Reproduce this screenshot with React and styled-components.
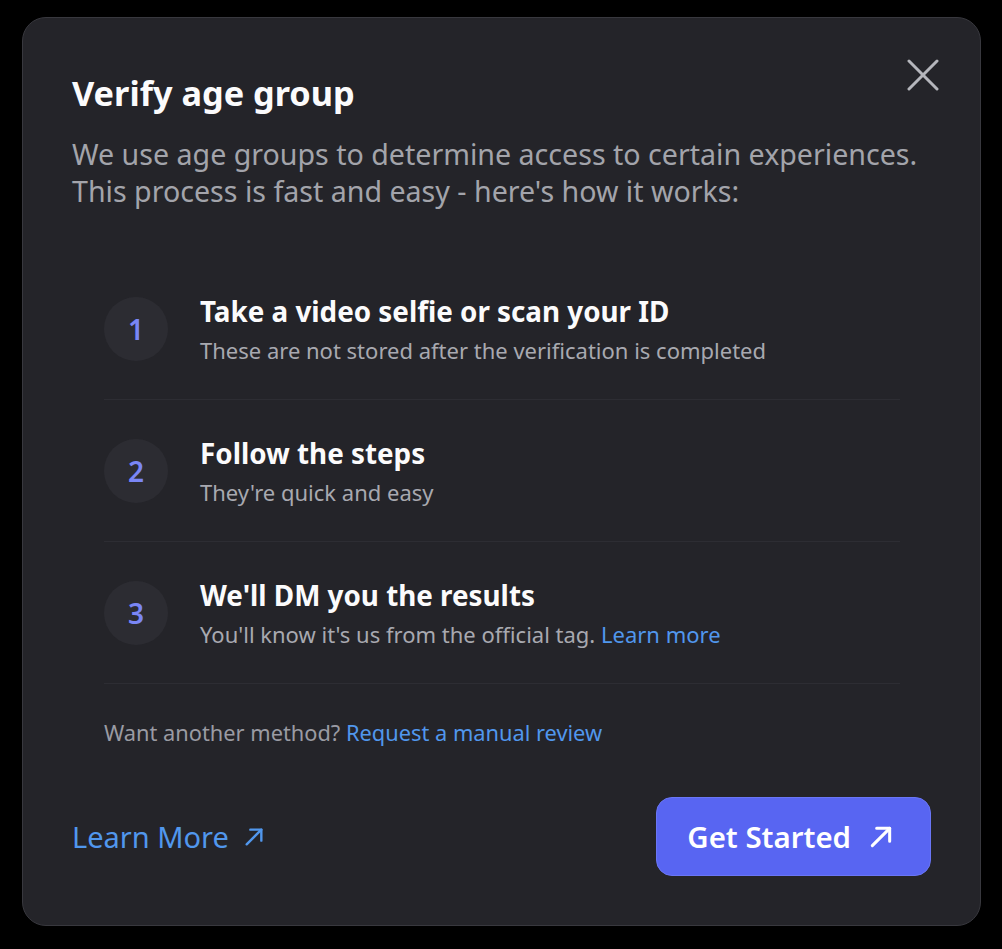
import React from "react";
import styled, { createGlobalStyle } from "styled-components";

const GlobalStyle = createGlobalStyle`
  html, body {
    margin: 0;
    padding: 0;
    background: #000;
  }
  body {
    font-family: "Noto Sans", "Open Sans", sans-serif;
  }
`;

const Page = styled.div`
  width: 1002px;
  height: 949px;
  padding: 17px 0 0 22px;
  box-sizing: border-box;
`;

const Modal = styled.div`
  position: relative;
  width: 959px;
  height: 909px;
  box-sizing: border-box;
  background: #242429;
  border: 1px solid #38383e;
  border-radius: 24px;
  padding: 53px 49px 0 49px;
  display: flex;
  flex-direction: column;
`;

const Close = styled.button`
  position: absolute;
  top: 37px;
  right: 37px;
  width: 40px;
  height: 40px;
  background: none;
  border: none;
  padding: 0;
  cursor: pointer;
  color: #b5b6bc;
  display: flex;
  align-items: center;
  justify-content: center;
`;

const Title = styled.h1`
  margin: 0;
  font-size: 34.3px;
  line-height: 44px;
  font-weight: 700;
  color: #fbfbfc;
`;

const Subtitle = styled.p`
  margin: 20px 0 0;
  font-size: 28.6px;
  line-height: 37px;
  color: #a3a4ab;
  white-space: nowrap;
`;

const Steps = styled.ol`
  list-style: none;
  margin: 49px 31px 0 32px;
  padding: 0;
`;

const Step = styled.li`
  display: flex;
  align-items: center;
  gap: 32px;
  height: 142px;
  border-bottom: 1px solid #2d2d33;
  box-sizing: border-box;
`;

const Badge = styled.div`
  flex: none;
  width: 64px;
  height: 64px;
  border-radius: 50%;
  background: #2c2c32;
  color: #7a86f5;
  font-size: 28px;
  font-weight: 600;
  display: flex;
  align-items: center;
  justify-content: center;
`;

const StepText = styled.div`
  display: flex;
  flex-direction: column;
`;

const StepTitle = styled.div`
  font-size: 27.8px;
  line-height: 34px;
  font-weight: 700;
  color: #fbfbfc;
`;

const StepDesc = styled.div`
  margin-top: 9px;
  font-size: 22px;
  line-height: 26px;
  color: #a8a9b0;
`;

const Link = styled.a`
  color: #5197ed;
  text-decoration: none;
  cursor: pointer;
`;

const Alt = styled.p`
  margin: 36px 0 0 32px;
  font-size: 21.8px;
  line-height: 26px;
  color: #9a9ba3;
`;

const Footer = styled.div`
  display: flex;
  align-items: center;
  justify-content: space-between;
  margin-top: 51px;
`;

const LearnMore = styled.a`
  display: flex;
  align-items: center;
  gap: 14px;
  color: #5197ed;
  font-size: 29px;
  line-height: 36px;
  text-decoration: none;
  cursor: pointer;
`;

const Primary = styled.button`
  display: flex;
  align-items: center;
  gap: 17px;
  height: 79px;
  padding: 0 36px 0 30px;
  border: 1px solid #6a76f5;
  border-radius: 16px;
  background: #5865f2;
  color: #fff;
  font-family: inherit;
  font-size: 29.4px;
  font-weight: 600;
  cursor: pointer;
`;

const Arrow = ({ size = 24, width = 2.6 }) => (
  <svg width={size} height={size} viewBox="0 0 24 24" fill="none" stroke="currentColor" strokeWidth={width} strokeLinecap="round" strokeLinejoin="round">
    <path d="M4 20 L20 4" />
    <path d="M8 4 H20 V16" />
  </svg>
);

const steps = [
  {
    n: 1,
    title: "Take a video selfie or scan your ID",
    desc: "These are not stored after the verification is completed",
  },
  { n: 2, title: "Follow the steps", desc: "They're quick and easy" },
  {
    n: 3,
    title: "We'll DM you the results",
    desc: (
      <>
        You'll know it's us from the official tag. <Link>Learn more</Link>
      </>
    ),
  },
];

export default function App() {
  return (
    <>
      <GlobalStyle />
      <Page>
        <Modal>
          <Close aria-label="Close">
            <svg width="32" height="32" viewBox="0 0 32 32" fill="none" stroke="currentColor" strokeWidth="3" strokeLinecap="round">
              <path d="M2 2 L30 30" />
              <path d="M30 2 L2 30" />
            </svg>
          </Close>
          <Title>Verify age group</Title>
          <Subtitle>
            We use age groups to determine access to certain experiences.
            <br />
            This process is fast and easy - here's how it works:
          </Subtitle>
          <Steps>
            {steps.map((s) => (
              <Step key={s.n}>
                <Badge>{s.n}</Badge>
                <StepText>
                  <StepTitle>{s.title}</StepTitle>
                  <StepDesc>{s.desc}</StepDesc>
                </StepText>
              </Step>
            ))}
          </Steps>
          <Alt>
            Want another method? <Link>Request a manual review</Link>
          </Alt>
          <Footer>
            <LearnMore>
              Learn More <Arrow size={22} width={2.6} />
            </LearnMore>
            <Primary>
              Get Started <Arrow size={26} width={2.8} />
            </Primary>
          </Footer>
        </Modal>
      </Page>
    </>
  );
}
